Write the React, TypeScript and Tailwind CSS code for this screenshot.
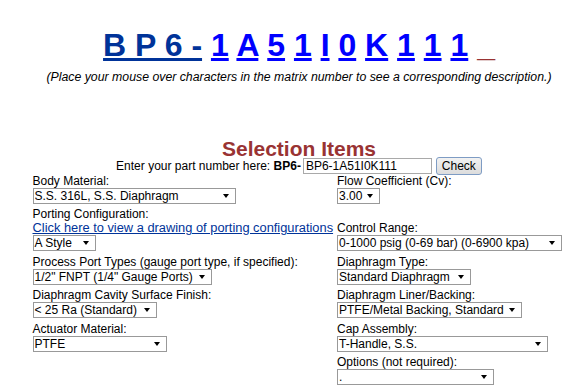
import { Fragment } from 'react';

const matrixChars = ['1', 'A', '5', '1', 'I', '0', 'K', '1', '1', '1'];

interface SelectBoxProps {
  value: string;
  width: string;
}

// old-style dropdown: thin grey border, tiny black arrow on the right
const SelectBox = ({ value, width }: SelectBoxProps) => {
  return (
    <div className={`relative h-[16px] border border-[#999999] bg-white ${width}`}>
      <span className="block whitespace-nowrap pl-[1px] leading-[14px]">{value}</span>
      <svg className="absolute right-[6px] top-[5px]" width="6" height="4" viewBox="0 0 6 4">
        <path d="M0 0h6L3 4z" fill="#000" />
      </svg>
    </div>
  );
};

const Label = ({ children }: { children: React.ReactNode }) => (
  <div className="h-[14px] whitespace-nowrap leading-[14px]">{children}</div>
);

const App = () => {
  return (
    <div className="min-h-screen bg-white font-[Liberation_Sans,Arial,sans-serif] text-[12px] text-black">
      <div className="pl-[18px] pt-[27px] text-center">
        {/* Matrix number */}
        <div className="whitespace-pre text-[32px] font-bold leading-[37px]">
          <a href="#" className="text-[#003399] underline">
            B P 6 -
          </a>{' '}
          {matrixChars.map((c, i) => (
            <Fragment key={i}>
              <a href="#" className="text-[#0000ff] underline">
                {c}
              </a>{' '}
            </Fragment>
          ))}
          <span className="text-[#993333]">_</span>
        </div>
        <p className="mt-[6px] text-[12.3px] italic leading-[14px]">
          (Place your mouse over characters in the matrix number to see a corresponding description.)
        </p>
        <h2 className="mt-[56px] text-[21px] font-bold leading-[17px] text-[#993333]">Selection Items</h2>

        {/* Part number entry */}
        <div className="mb-[-1.5px] flex h-[18px] items-center justify-center">
          <span className="leading-[14px]">
            Enter your part number here: <b>BP6-</b>
          </span>
          <input
            type="text"
            defaultValue="BP6-1A51I0K111"
            className="ml-[2px] h-[16px] w-[129px] border border-[#a9a9a9] bg-white pl-[2px] text-[12px] leading-[14px] outline-none"
          />
          <button className="ml-[4px] h-[18px] w-[46px] rounded-[3px] border border-[#7e9cc4] bg-gradient-to-b from-[#f2f2f2] to-[#dcdcdc] text-[12px] leading-[14px]">
            Check
          </button>
        </div>
      </div>

      {/* Selection grid */}
      <div className="grid grid-cols-[304.5px_1fr] gap-y-[3.5px] pl-[32.5px]">
        <div>
          <Label>Body Material:</Label>
          <SelectBox value="S.S. 316L, S.S. Diaphragm" width="w-[203px]" />
        </div>
        <div>
          <Label>Flow Coefficient (Cv):</Label>
          <SelectBox value="3.00" width="w-[43px]" />
        </div>

        <div>
          <Label>Porting Configuration:</Label>
          <Label>
            <a href="#" className="text-[12.85px] text-[#003399] underline">
              Click here to view a drawing of porting configurations
            </a>
          </Label>
          <SelectBox value="A Style" width="w-[63px]" />
        </div>
        <div>
          <div className="h-[14px]" />
          <Label>Control Range:</Label>
          <SelectBox value="0-1000 psig (0-69 bar) (0-6900 kpa)" width="w-[225px]" />
        </div>

        <div>
          <Label>Process Port Types (gauge port type, if specified):</Label>
          <SelectBox value={'1/2" FNPT (1/4" Gauge Ports)'} width="w-[179px]" />
        </div>
        <div>
          <Label>Diaphragm Type:</Label>
          <SelectBox value="Standard Diaphragm" width="w-[134px]" />
        </div>

        <div>
          <Label>Diaphragm Cavity Surface Finish:</Label>
          <SelectBox value="< 25 Ra (Standard)" width="w-[124px]" />
        </div>
        <div>
          <Label>Diaphragm Liner/Backing:</Label>
          <SelectBox value="PTFE/Metal Backing, Standard" width="w-[185px]" />
        </div>

        <div>
          <Label>Actuator Material:</Label>
          <SelectBox value="PTFE" width="w-[134px]" />
        </div>
        <div>
          <Label>Cap Assembly:</Label>
          <SelectBox value="T-Handle, S.S." width="w-[211px]" />
        </div>

        <div />
        <div>
          <Label>Options (not required):</Label>
          <SelectBox value="." width="w-[157px]" />
        </div>
      </div>
    </div>
  );
};

export default App;
